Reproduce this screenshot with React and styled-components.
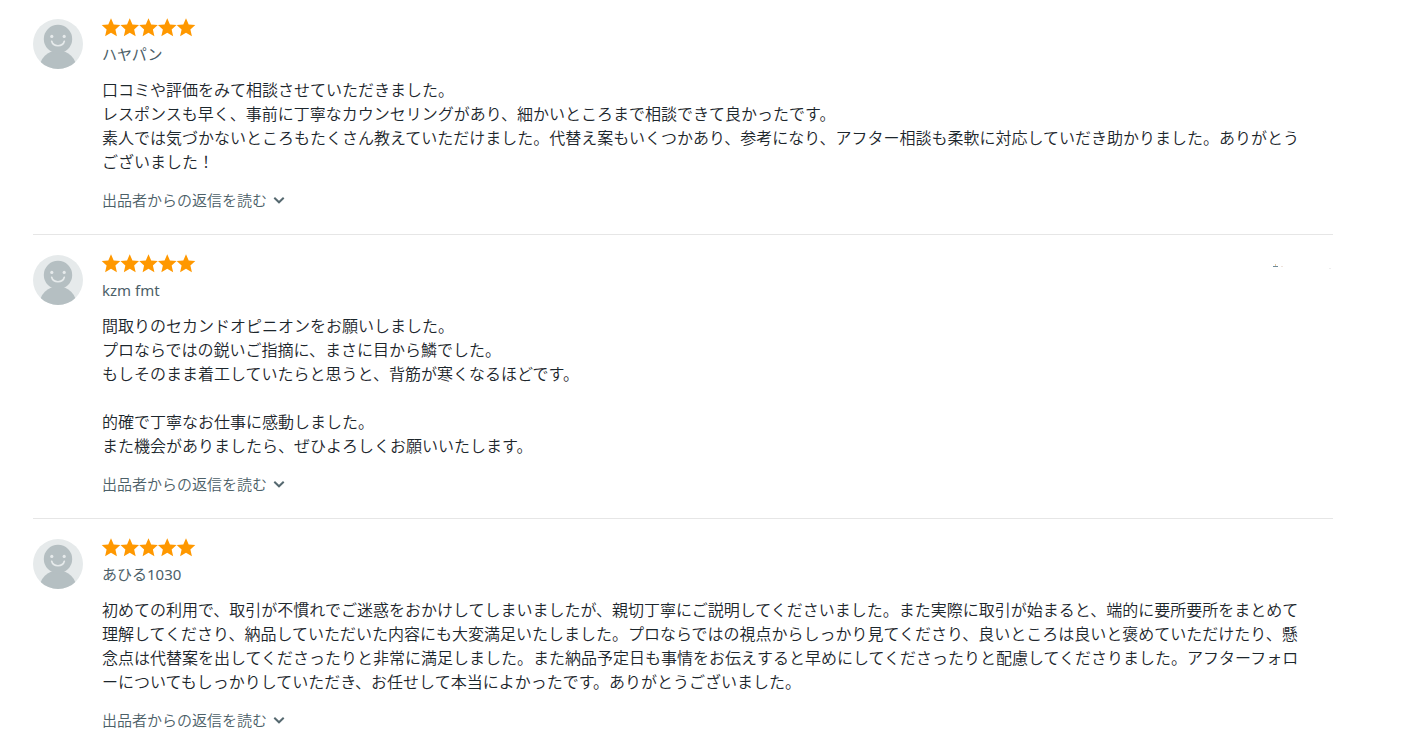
import React from 'react'
import styled, { createGlobalStyle } from 'styled-components'

const reviews = [
    {
        id: 1,
        name: 'ハヤパン',
        comment: `口コミや評価をみて相談させていただきました。
レスポンスも早く、事前に丁寧なカウンセリングがあり、細かいところまで相談できて良かったです。
素人では気づかないところもたくさん教えていただけました。代替え案もいくつかあり、参考になり、アフター相談も柔軟に対応していだき助かりました。ありがとうございました！`,
    },
    {
        id: 2,
        name: 'kzm fmt',
        marked: true,
        comment: `間取りのセカンドオピニオンをお願いしました。
プロならではの鋭いご指摘に、まさに目から鱗でした。
もしそのまま着工していたらと思うと、背筋が寒くなるほどです。

的確で丁寧なお仕事に感動しました。
また機会がありましたら、ぜひよろしくお願いいたします。`,
    },
    {
        id: 3,
        name: 'あひる1030',
        comment: `初めての利用で、取引が不慣れでご迷惑をおかけしてしまいましたが、親切丁寧にご説明してくださいました。また実際に取引が始まると、端的に要所要所をまとめて理解してくださり、納品していただいた内容にも大変満足いたしました。プロならではの視点からしっかり見てくださり、良いところは良いと褒めていただけたり、懸念点は代替案を出してくださったりと非常に満足しました。また納品予定日も事情をお伝えすると早めにしてくださったりと配慮してくださりました。アフターフォローについてもしっかりしていただき、お任せして本当によかったです。ありがとうございました。`,
    },
]

function Avatar() {
    return (
        <AvatarIcon viewBox="0 0 50 50" aria-hidden="true">
            <defs>
                <clipPath id="avatar-clip">
                    <circle cx="25" cy="25" r="25" />
                </clipPath>
            </defs>
            <g clipPath="url(#avatar-clip)">
                <rect width="50" height="50" fill="#e6eaeb" />
                <circle cx="25" cy="50" r="18.6" fill="#b5bfc2" />
                <circle cx="25" cy="20" r="14.2" fill="#b5bfc2" />
            </g>
            <circle cx="18.8" cy="17.4" r="1.6" fill="#e6eaeb" />
            <circle cx="31.2" cy="17.4" r="1.6" fill="#e6eaeb" />
            <path d="M18.7 22.3C20.2 28.2 29.8 28.2 31.3 22.3" fill="none" stroke="#e6eaeb" strokeWidth="1.7" strokeLinecap="round" />
        </AvatarIcon>
    )
}

function Stars() {
    return (
        <StarRow viewBox="0 0 94 18" role="img" aria-label="5">
            {[0, 1, 2, 3, 4].map((n) => (
                <path
                    key={n}
                    transform={`translate(${n * 18.75} 0)`}
                    d="M9 -0.8L11.7 5.4L18.3 6.1L13.4 10.6L14.9 17.2L9 13.8L3.1 17.2L4.6 10.6L-0.3 6.1L6.3 5.4Z"
                />
            ))}
        </StarRow>
    )
}

function Review({ review }) {
    return (
        <ReviewItem>
            <Avatar />
            <Content>
                <Header>
                    <Stars />
                    {review.marked && (
                        <Marks viewBox="0 0 60 18" aria-hidden="true">
                            <rect x="2" y="9" width="1" height="2" fill="#e8c9a0" />
                            <rect x="0" y="11" width="5" height="1" fill="#6f8c9b" />
                            <rect x="8" y="11" width="2" height="1" fill="#efe3dc" />
                            <rect x="56" y="13" width="2" height="1" fill="#eeeeee" />
                        </Marks>
                    )}
                </Header>
                <UserName>{review.name}</UserName>
                <Comment>{review.comment}</Comment>
                <ReplyButton type="button">
                    出品者からの返信を読む
                    <Chevron viewBox="0 0 12 12" aria-hidden="true">
                        <path d="M1.3 3.8L6 8.3L10.7 3.8" />
                    </Chevron>
                </ReplyButton>
            </Content>
        </ReviewItem>
    )
}

function App() {
    return (
        <>
            <GlobalStyle />
            <ReviewList>
                {reviews.map((review) => (
                    <Review key={review.id} review={review} />
                ))}
            </ReviewList>
        </>
    )
}

export default App

const GlobalStyle = createGlobalStyle`
    * {
        box-sizing: border-box;
    }

    body {
        margin: 0;
        background-color: #fff;
        color: #1c262c;
        font-family: 'Noto Sans', 'Noto Sans CJK JP', sans-serif;
        font-weight: 350;
        overflow-x: hidden;
    }
`

const ReviewList = styled.ul`
    list-style: none;
    margin: 0;
    padding: 0 84px 0 33px;
`

const ReviewItem = styled.li`
    display: flex;
    gap: 19px;
    padding: 20px 0 24px;
    border-bottom: 1px solid #e6e6e6;

    &:first-child {
        padding-top: 19px;
    }

    &:last-child {
        border-bottom: none;
        padding-bottom: 0;
    }
`

const AvatarIcon = styled.svg`
    flex: none;
    width: 50px;
    height: 50px;
`

const Content = styled.div`
    flex: 1;
    min-width: 0;
`

const Header = styled.div`
    display: flex;
    justify-content: space-between;
    height: 18px;
`

const StarRow = styled.svg`
    width: 94px;
    height: 18px;
    fill: #ff9800;
    overflow: visible;
`

const Marks = styled.svg`
    width: 60px;
    height: 18px;
`

const UserName = styled.div`
    margin-top: 7px;
    color: #4c6068;
    font-size: 15px;
    font-weight: 400;
    line-height: 20px;
`

const Comment = styled.p`
    margin: 14px 0 16px;
    padding-right: 20px;
    font-size: 16px;
    line-height: 24px;
    white-space: pre-line;
`

const ReplyButton = styled.button`
    display: flex;
    align-items: center;
    gap: 6px;
    padding: 0;
    border: none;
    background: none;
    color: #4c6068;
    font-family: inherit;
    font-size: 15px;
    font-weight: inherit;
    line-height: 20px;
    cursor: pointer;
`

const Chevron = styled.svg`
    width: 12px;
    height: 12px;
    fill: none;
    stroke: #566970;
    stroke-width: 2;
`
